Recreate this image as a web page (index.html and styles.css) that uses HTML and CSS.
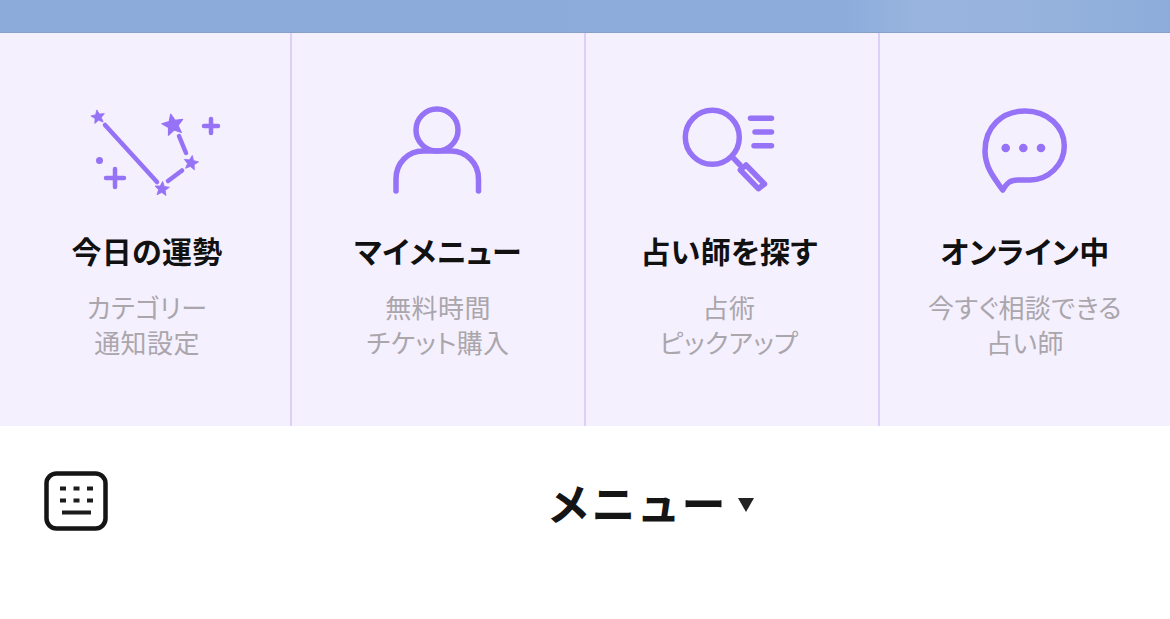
FILE: index.html
```html
<!DOCTYPE html>
<html lang="ja">
<head>
  <meta charset="UTF-8">
  <meta name="viewport" content="width=device-width, initial-scale=1.0">
  <title>メニュー</title>
  <link rel="stylesheet" href="styles.css">
</head>
<body>
  <div class="sky"></div>

  <div class="menu">
    <div class="tile tile-first">
      <svg class="tile-icon" viewBox="2 0 150 100">
        <defs>
          <polygon id="star" points="0,-10 2.700,-3.700 9.500,-3.100 4.400,1.400 5.900,8.100 0,4.600 -5.900,8.100 -4.400,1.400 -9.500,-3.100 -2.700,-3.700"/>
        </defs>
        <g class="icon-fill star-set">
          <use href="#star" transform="translate(28 14) rotate(-10) scale(.72)"/>
          <use href="#star" transform="translate(103 22) rotate(-12) scale(1.120)"/>
          <use href="#star" transform="translate(121 60) rotate(10) scale(.76)"/>
          <use href="#star" transform="translate(92 86) rotate(5) scale(.76)"/>
          <circle cx="29.500" cy="57.500" r="3.500"/>
        </g>
        <g class="icon-line thin">
          <path d="M35 22 L87 79"/>
          <path d="M98 78 L112 67.500"/>
          <path d="M109 33 L116 50"/>
          <path d="M141 16 V30 M134 23 H148"/>
          <path d="M45 66 V84 M36 75 H54"/>
        </g>
      </svg>
      <h2 class="tile-title">今日の運勢</h2>
      <p class="tile-sub">カテゴリー<br>通知設定</p>
    </div>

    <div class="tile">
      <svg class="tile-icon" viewBox="0 0 150 100">
        <g class="icon-line">
          <circle cx="74" cy="27" r="21"/>
          <path d="M33 88 V76 C33 60 45 48 60 48 H88 C103 48 115.500 60 115.500 76 V88"/>
        </g>
      </svg>
      <h2 class="tile-title">マイメニュー</h2>
      <p class="tile-sub">無料時間<br>チケット購入</p>
    </div>

    <div class="tile tile-third">
      <svg class="tile-icon" viewBox="-3 0 150 100">
        <g class="icon-line">
          <circle cx="55.300" cy="34.300" r="27"/>
          <path d="M75.700 54.300 L83 62"/>
          <path d="M93.500 15.300 H114.500 M98 29 H114.500 M97 42.700 H114.500"/>
          <path d="M89 62 L83.300 67 L101.300 85.700 L107.500 81 Z"/>
        </g>
      </svg>
      <h2 class="tile-title">占い師を探す</h2>
      <p class="tile-sub">占術<br>ピックアップ</p>
    </div>

    <div class="tile">
      <svg class="tile-icon" viewBox="0 0 150 100">
        <g class="icon-line">
          <path d="M52.700 87 C44 75 35 64 35 48 C35 24 52 8 75 8 C98 8 114.300 24 114.300 43 C114.300 62 98 77 80 77 H68 C60 77 57 80 52.700 87 Z"/>
        </g>
        <g class="icon-fill">
          <circle cx="55.700" cy="45" r="4.300"/>
          <circle cx="73.300" cy="45" r="4.300"/>
          <circle cx="91" cy="45" r="4.300"/>
        </g>
      </svg>
      <h2 class="tile-title">オンライン中</h2>
      <p class="tile-sub">今すぐ相談できる<br>占い師</p>
    </div>
  </div>

  <div class="footer">
    <svg class="keyboard" viewBox="0 0 64 60">
      <rect x="2.500" y="2.500" width="59" height="55" rx="10" class="key-frame"/>
      <g class="key-dots">
        <rect x="16" y="15.500" width="6" height="4"/>
        <rect x="29.500" y="15.500" width="6" height="4"/>
        <rect x="43" y="15.500" width="6" height="4"/>
        <rect x="16" y="27.500" width="6" height="4"/>
        <rect x="29.500" y="27.500" width="6" height="4"/>
        <rect x="43" y="27.500" width="6" height="4"/>
        <rect x="18" y="39.500" width="29" height="4"/>
      </g>
    </svg>
    <div class="footer-label">
      <span>メニュー</span>
      <i class="caret"></i>
    </div>
  </div>
</body>
</html>
```

FILE: styles.css
```css
* {
  margin: 0;
  padding: 0;
  box-sizing: border-box;
}
body {
  width: 1170px;
  height: 619px;
  overflow: hidden;
  background: #fff;
  font-family: "Noto Sans CJK JP", "Noto Sans", sans-serif;
}
.sky {
  height: 33px;
  background: linear-gradient(90deg, #8cabda 0%, #8dacdb 72%, #99b5df 79%, #98b4de 86%, #8dadda 100%);
  border-bottom: 1px solid #86a0c8;
}
.menu {
  display: grid;
  grid-template-columns: 292px 294px 294px 290px;
  height: 393px;
  background: #f5f0fe;
}
.tile {
  display: flex;
  flex-direction: column;
  align-items: center;
  padding-top: 70px;
  border-right: 2px solid #dcd0f8;
}
.tile-first {
  padding-left: 4px;
}
.tile-third {
  padding-right: 6px;
}
.tile:last-child {
  border-right: none;
}
.tile-icon {
  width: 150px;
  height: 100px;
  margin-bottom: 27px;
}
.icon-line {
  fill: none;
  stroke: #9672f6;
  stroke-width: 5.500;
  stroke-linecap: round;
  stroke-linejoin: round;
}
.icon-line.thin {
  stroke-width: 4.500;
}
.icon-fill {
  fill: #9672f6;
}
.star-set use {
  stroke: #9672f6;
  stroke-width: 1;
  stroke-linejoin: round;
}
.tile-title {
  font-size: 30px;
  line-height: 40px;
  font-weight: 700;
  color: #111;
  white-space: nowrap;
  letter-spacing: .3px;
  font-feature-settings: "palt";
}
.tile-sub {
  margin-top: 19px;
  font-size: 26px;
  line-height: 35px;
  font-weight: 400;
  color: #aaa6ac;
  text-align: center;
  white-space: nowrap;
  letter-spacing: .4px;
  font-feature-settings: "palt";
}
.footer {
  position: relative;
  display: flex;
  justify-content: center;
  height: 193px;
  padding: 44px 0 0 130px;
  background: #fff;
}
.keyboard {
  position: absolute;
  left: 44px;
  top: 45px;
  width: 64px;
  height: 60px;
}
.key-frame {
  fill: #fff;
  stroke: #151515;
  stroke-width: 4.500;
}
.key-dots {
  fill: #1c1c1c;
}
.footer-label {
  display: flex;
  align-items: center;
  height: 64px;
  gap: 11px;
  font-size: 44px;
  font-weight: 700;
  letter-spacing: 1px;
  color: #151515;
}
.caret {
  width: 0;
  height: 0;
  margin-top: 6px;
  border-left: 8px solid transparent;
  border-right: 8px solid transparent;
  border-top: 14px solid #222;
}
```
